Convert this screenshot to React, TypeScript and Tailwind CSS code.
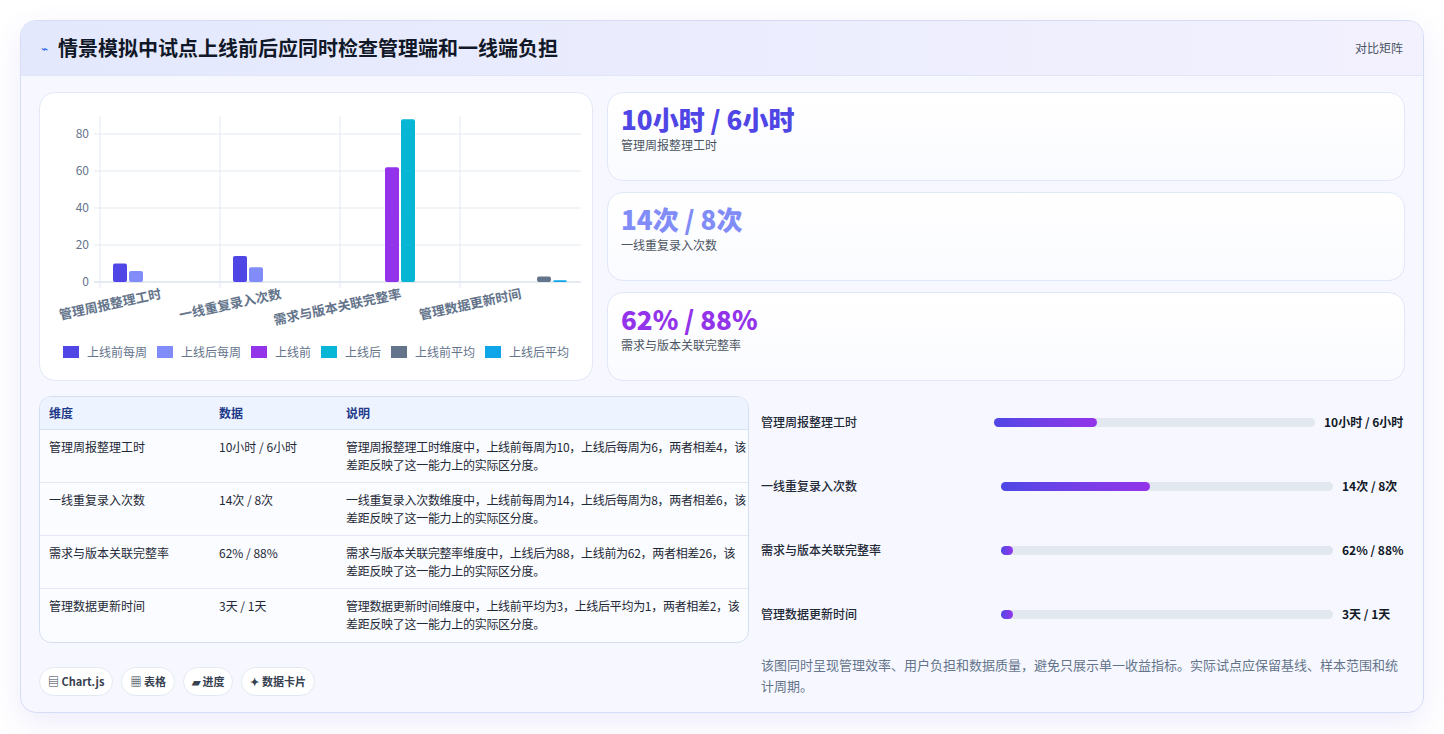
const FONT = '"Noto Sans CJK SC", "Noto Sans", sans-serif';

const bars = [
  { x: 112, v: 10, c: '#4f46e5' },
  { x: 128, v: 6, c: '#818cf8' },
  { x: 232, v: 14, c: '#4f46e5' },
  { x: 248, v: 8, c: '#818cf8' },
  { x: 384, v: 62, c: '#9333ea' },
  { x: 400, v: 88, c: '#06b6d4' },
  { x: 536, v: 3, c: '#64748b' },
  { x: 552, v: 1, c: '#0ea5e9' },
];

const legend = [
  { label: '上线前每周', c: '#4f46e5' },
  { label: '上线后每周', c: '#818cf8' },
  { label: '上线前', c: '#9333ea' },
  { label: '上线后', c: '#06b6d4' },
  { label: '上线前平均', c: '#64748b' },
  { label: '上线后平均', c: '#0ea5e9' },
];

function Chart() {
  // page coords minus card origin (40, 93)
  const ox = 40;
  const oy = 93;
  const y0 = 282;
  const k = 1.85;
  const cats = ['管理周报整理工时', '一线重复录入次数', '需求与版本关联完整率', '管理数据更新时间'];
  return (
    <svg width="553" height="288" className="block" style={{ fontFamily: FONT }}>
      {[0, 20, 40, 60, 80].map((t) => (
        <g key={t}>
          <line x1={100 - ox - 6} x2={581 - ox} y1={y0 - t * k - oy} y2={y0 - t * k - oy} stroke={t === 0 ? '#cbd5e1' : '#e2e8f0'} />
          <text x={89 - ox} y={y0 - t * k - oy + 4} textAnchor="end" fontSize="12" fill="#64748b">{t}</text>
        </g>
      ))}
      {[100, 220, 340, 460].map((x) => (
        <line key={x} x1={x - ox} x2={x - ox} y1={116 - oy} y2={y0 - oy + 6} stroke="#e2e8f0" />
      ))}
      {bars.map((b) => (
        <rect key={b.x} x={b.x + 1 - ox} y={y0 - b.v * k - oy} width="14" height={b.v * k} rx="2" fill={b.c} />
      ))}
      {cats.map((c, i) => {
        const ax = 162 + i * 120 - ox;
        const ay = 298 - oy;
        return (
          <text key={c} x={ax} y={ay} textAnchor="end" fontSize="13" fontWeight="600" fill="#64748b" transform={`rotate(-12 ${ax} ${ay})`}>{c}</text>
        );
      })}
      {(() => {
        let x = 63 - ox;
        return legend.map((l) => {
          const g = (
            <g key={l.label}>
              <rect x={x} y={346 - oy} width="16" height="12" fill={l.c} />
              <text x={x + 24} y={357 - oy} fontSize="12" fill="#64748b">{l.label}</text>
            </g>
          );
          x += l.label.length * 12 + 34;
          return g;
        });
      })()}
    </svg>
  );
}

const kpis = [
  { v: '10小时 / 6小时', l: '管理周报整理工时', c: 'text-[#4f46e5]' },
  { v: '14次 / 8次', l: '一线重复录入次数', c: 'text-[#818cf8]' },
  { v: '62% / 88%', l: '需求与版本关联完整率', c: 'text-[#9333ea]' },
];

const rows = [
  ['管理周报整理工时', '10小时 / 6小时', '管理周报整理工时维度中，上线前每周为10，上线后每周为6，两者相差4，该差距反映了这一能力上的实际区分度。'],
  ['一线重复录入次数', '14次 / 8次', '一线重复录入次数维度中，上线前每周为14，上线后每周为8，两者相差6，该差距反映了这一能力上的实际区分度。'],
  ['需求与版本关联完整率', '62% / 88%', '需求与版本关联完整率维度中，上线后为88，上线前为62，两者相差26，该差距反映了这一能力上的实际区分度。'],
  ['管理数据更新时间', '3天 / 1天', '管理数据更新时间维度中，上线前平均为3，上线后平均为1，两者相差2，该差距反映了这一能力上的实际区分度。'],
];

const progress = [
  { l: '管理周报整理工时', v: '10小时 / 6小时', p: '32%' },
  { l: '一线重复录入次数', v: '14次 / 8次', p: '45%' },
  { l: '需求与版本关联完整率', v: '62% / 88%', p: '3.6%' },
  { l: '管理数据更新时间', v: '3天 / 1天', p: '3.6%' },
];

export default function App() {
  return (
    <div className="min-h-[734px] bg-white p-[20px]" style={{ fontFamily: FONT }}>
      <div className="rounded-2xl border border-[#d6dcf5] bg-[#f7f8ff] shadow-[0_10px_30px_rgba(79,70,229,0.10)] overflow-hidden">
        {/* Header */}
        <div className="flex h-[55px] items-center justify-between border-b border-[#e0e6f8] bg-gradient-to-r from-[#e3e8fd] to-[#f3f1fe] px-[20px]">
          <div className="flex items-center gap-[10px]">
            <span className="text-[12px] text-[#2563eb]">⌁</span>
            <h1 className="text-[20px] font-bold text-[#111827]">情景模拟中试点上线前后应同时检查管理端和一线端负担</h1>
          </div>
          <span className="text-[12px] text-[#4b5563]">对比矩阵</span>
        </div>

        {/* Body */}
        <div className="px-[18px] pt-[16px] pb-[16px]">
          <div className="flex gap-[14px]">
            <div className="h-[289px] w-[554px] shrink-0 rounded-2xl border border-[#e2e8f5] bg-white">
              <Chart />
            </div>
            <div className="flex flex-1 flex-col gap-[11px]">
              {kpis.map((k) => (
                <div key={k.l} className="h-[89px] rounded-2xl border border-[#e0e7f7] bg-gradient-to-b from-white to-[#fafbff] px-[13px] pt-[9px]">
                  <div className={`text-[26px] font-extrabold leading-[34px] ${k.c}`}>{k.v}</div>
                  <div className="text-[12px] text-[#4b5563]">{k.l}</div>
                </div>
              ))}
            </div>
          </div>

          <div className="mt-[15px] flex gap-[12px]">
            <div className="w-[710px] shrink-0">
              <div className="overflow-hidden rounded-xl border border-[#d5deef] bg-[#fafcff]">
                <div className="grid h-[33px] grid-cols-[170px_127px_1fr] items-center border-b border-[#d8e2f3] bg-[#eef4ff] px-[9px] text-[12px] font-semibold text-[#1e3a8a]">
                  <span>维度</span><span>数据</span><span>说明</span>
                </div>
                {rows.map((r, i) => (
                  <div key={r[0]} className={`grid h-[53px] grid-cols-[170px_127px_1fr] items-start pl-[9px] pr-[2px] pt-[8px] text-[12px] leading-[18px] text-[#1f2937] ${i < 3 ? 'border-b border-[#e3e9f4]' : ''}`}>
                    <span>{r[0]}</span><span>{r[1]}</span><span className="tracking-[-0.3px]">{r[2]}</span>
                  </div>
                ))}
              </div>
              <div className="mt-[24px] flex gap-[8px]">
                {['▤ Chart.js', '▦ 表格', '▰ 进度', '✦ 数据卡片'].map((c) => (
                  <span key={c} className="flex h-[29px] items-center rounded-full border border-[#e2e8f0] bg-white px-[8px] text-[11px] font-semibold text-[#374151]">{c}</span>
                ))}
              </div>
            </div>

            <div className="flex-1">
              <div className="-mt-[6px] flex flex-col">
                {progress.map((p, i) => (
                  <div key={p.l} className="flex h-[64px] items-center">
                    <span className="w-[233px] shrink-0 text-[12px] font-medium text-[#1f2937]">{p.l}</span>
                    <div className={`h-[9px] flex-1 rounded-full bg-[#e2e8f0] ${i === 0 ? '' : 'ml-[7px]'}`}>
                      <div className="h-full min-w-[12px] rounded-full bg-gradient-to-r from-[#4f46e5] to-[#9333ea]" style={{ width: p.p }} />
                    </div>
                    <span className={`pl-[9px] text-[12px] font-bold text-[#111827] ${i === 0 ? 'w-[90px]' : 'w-[72px]'}`}>{p.v}</span>
                  </div>
                ))}
              </div>
              <p className="mt-[8px] text-[13px] leading-[21px] text-[#64748b]">该图同时呈现管理效率、用户负担和数据质量，避免只展示单一收益指标。实际试点应保留基线、样本范围和统计周期。</p>
            </div>
          </div>
        </div>
      </div>
    </div>
  );
}
